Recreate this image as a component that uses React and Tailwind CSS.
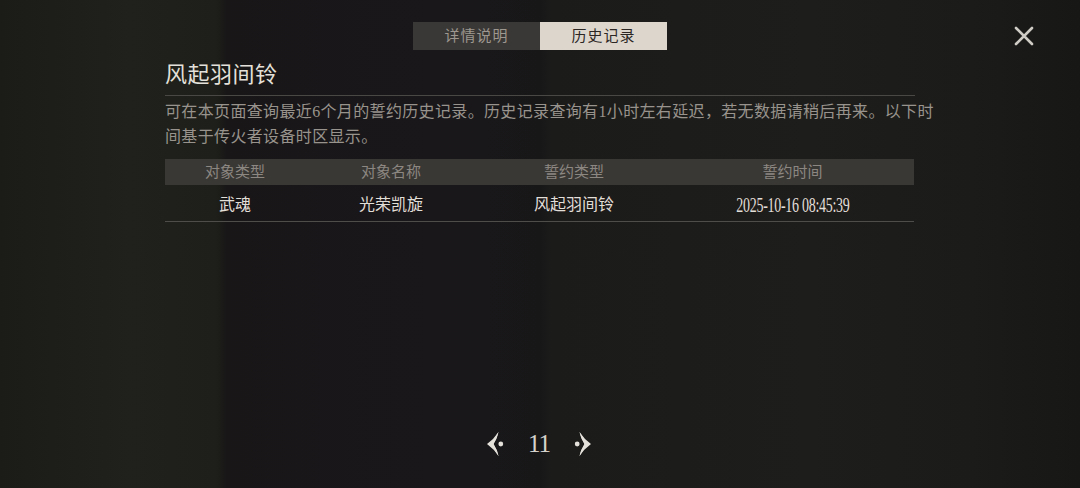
import React from "react";

const rows = [
  { type: "武魂", name: "光荣凯旋", oath: "风起羽间铃", time: "2025-10-16 08:45:39" },
];

const Arrow = ({ flip }) => (
  <svg
    width="18"
    height="26"
    viewBox="0 0 18 26"
    className={flip ? "-scale-x-100" : ""}
    fill="#e4e0da"
  >
    <path d="M12.5 1 Q8 8 1 13 Q8 18 12.5 25 Q11 18 7.5 13 Q11 8 12.5 1 Z" />
    <path d="M12.5 1 L11 6 L7.5 13 L11 20 L12.5 25 L6 15 L4 13 L6 11 Z" />
    <circle cx="14.8" cy="13" r="2.4" />
  </svg>
);

const App = () => {
  return (
    <div className="w-[1080px] h-[488px] flex flex-col relative overflow-hidden bg-[linear-gradient(to_right,#1b1c18_0%,#20211c_12%,#1e1f1a_20%,#181617_21%,#19171a_40%,#181718_50%,#1b1b1a_51%,#1d1d1b_75%,#1b1b1a_90%,#171716_100%)] font-['Liberation_Serif','Noto_Sans_CJK_SC',serif]">
      {/* tabs */}
      <header className="pt-[22px] flex justify-center">
        <div className="flex">
          <button className="w-[127px] h-[28px] bg-[#3a3836] text-[#9d978f] text-[15px] tracking-[1px]">
            详情说明
          </button>
          <button className="w-[127px] h-[28px] bg-[#ddd6cd] text-[#2b2624] text-[15px] tracking-[1px]">
            历史记录
          </button>
        </div>
      </header>
      <button className="absolute top-[26px] right-[46px] w-[20px] h-[20px]">
        <svg width="20" height="20" viewBox="0 0 20 20" stroke="#cfcbc5" strokeWidth="2.6" strokeLinecap="round">
          <path d="M2 2 L18 18 M18 2 L2 18" />
        </svg>
      </button>

      <main className="pl-[165px] flex flex-col">
        <h1 className="mt-[10px] h-[30px] leading-[30px] text-[22px] text-[#e4e0da] tracking-[0.5px]">
          风起羽间铃
        </h1>
        <div className="mt-[5px] w-[750px] h-px bg-[#4a4845]" />
        <p className="mt-[3px] w-[775px] text-[16px] leading-[25px] tracking-[0.35px] text-[#98938c]">
          可在本页面查询最近6个月的誓约历史记录。历史记录查询有1小时左右延迟，若无数据请稍后再来。以下时间基于传火者设备时区显示。
        </p>

        <div className="mt-[10px] w-[749px]">
          <div className="grid grid-cols-[140px_172px_194px_1fr] h-[26px] items-center bg-[#3a3835] text-[15px] text-[#8c8781] text-center">
            <span>对象类型</span>
            <span>对象名称</span>
            <span>誓约类型</span>
            <span>誓约时间</span>
          </div>
          {rows.map((r, i) => (
            <div
              key={i}
              className="grid grid-cols-[140px_172px_194px_1fr] h-[37px] pt-[3px] items-center border-b border-[#4f4d4a] text-[16px] text-[#e2ded8] text-center"
            >
              <span>{r.type}</span>
              <span>{r.name}</span>
              <span>{r.oath}</span>
              <span className="flex justify-center">
                <span className="inline-block text-[20px] leading-[24px] tracking-[-0.4px] scale-x-[0.7]">{r.time}</span>
              </span>
            </div>
          ))}
        </div>
      </main>

      {/* pagination */}
      <footer className="mt-auto pb-[28px] flex justify-center items-center gap-[20px] pr-[2px]">
        <Arrow />
        <span className="w-[30px] text-center text-[25px] leading-[32px] text-[#d6d2cc] tracking-[-1px]">11</span>
        <Arrow flip />
      </footer>
    </div>
  );
};

export default App;
